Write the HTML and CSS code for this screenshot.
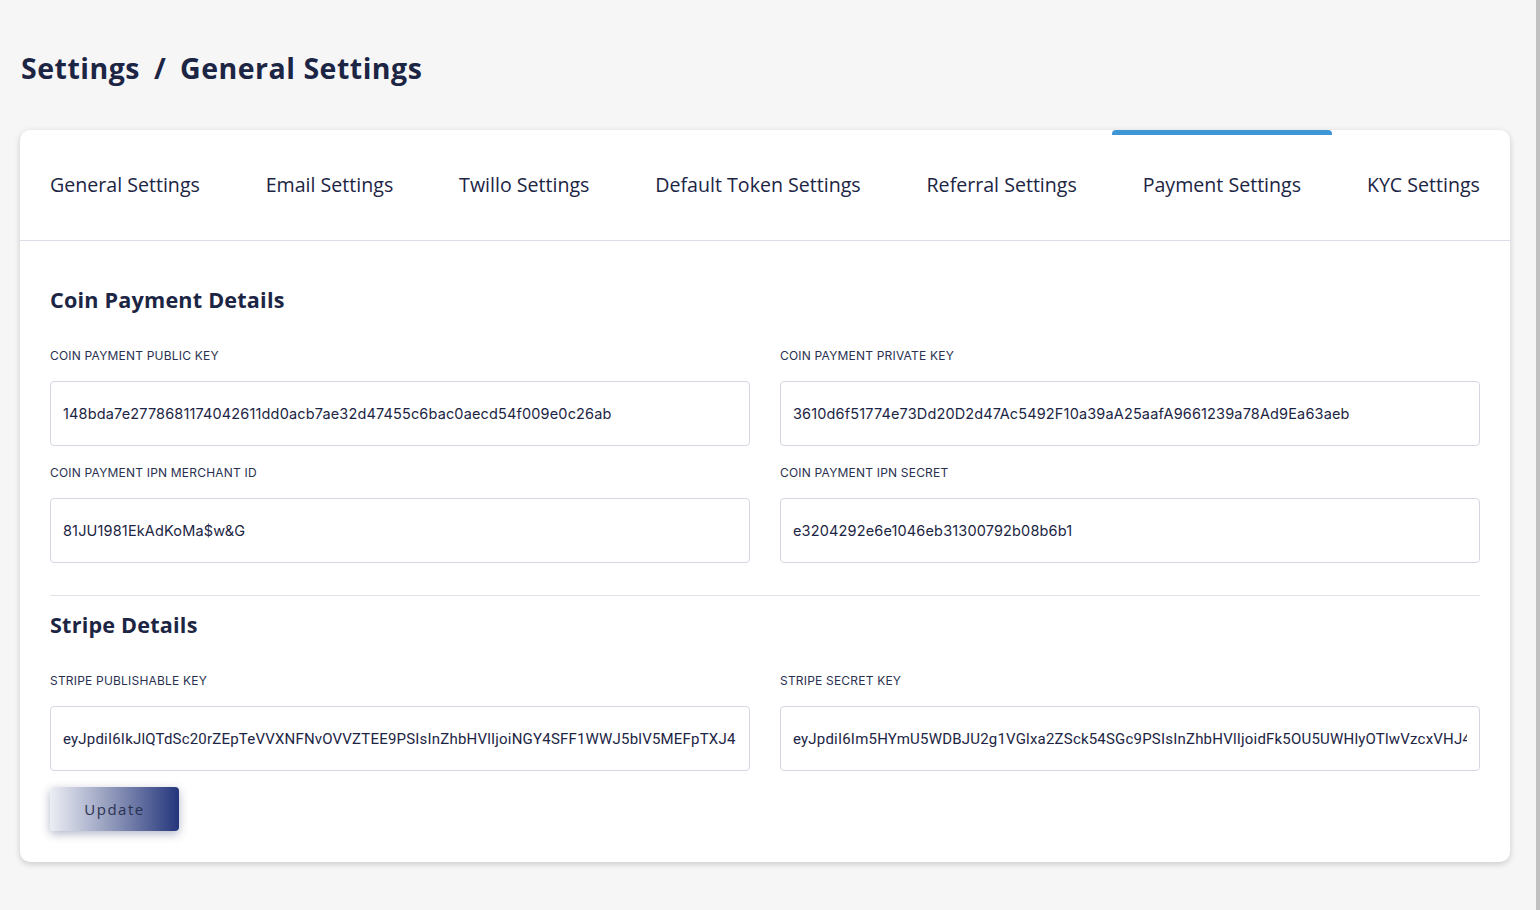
FILE: index.html
```html
<!DOCTYPE html>
<html lang="en">
<head>
<meta charset="utf-8">
<title>Settings / General Settings</title>
<link rel="stylesheet" href="styles.css">
</head>
<body>
<div class="page">
  <h1 class="page-title">Settings <span class="sep">/</span> General Settings</h1>
  <div class="card">
    <nav class="tabs">
      <a class="tab">General Settings</a>
      <a class="tab">Email Settings</a>
      <a class="tab">Twillo Settings</a>
      <a class="tab">Default Token Settings</a>
      <a class="tab">Referral Settings</a>
      <a class="tab active">Payment Settings</a>
      <a class="tab">KYC Settings</a>
    </nav>
    <div class="card-body">
      <section class="group">
        <h2 class="group-title">Coin Payment Details</h2>
        <div class="grid">
          <div class="field">
            <label class="label">COIN PAYMENT PUBLIC KEY</label>
            <input class="input" type="text" value="148bda7e2778681174042611dd0acb7ae32d47455c6bac0aecd54f009e0c26ab">
          </div>
          <div class="field">
            <label class="label">COIN PAYMENT PRIVATE KEY</label>
            <input class="input" type="text" value="3610d6f51774e73Dd20D2d47Ac5492F10a39aA25aafA9661239a78Ad9Ea63aeb">
          </div>
          <div class="field">
            <label class="label">COIN PAYMENT IPN MERCHANT ID</label>
            <input class="input" type="text" value="81JU1981EkAdKoMa$w&amp;G">
          </div>
          <div class="field">
            <label class="label">COIN PAYMENT IPN SECRET</label>
            <input class="input" type="text" value="e3204292e6e1046eb31300792b08b6b1">
          </div>
        </div>
      </section>
      <section class="group stripe">
        <h2 class="group-title">Stripe Details</h2>
        <div class="grid">
          <div class="field">
            <label class="label">STRIPE PUBLISHABLE KEY</label>
            <input class="input narrow" type="text" value="eyJpdiI6IkJlQTdSc20rZEpTeVVXNFNvOVVZTEE9PSIsInZhbHVlIjoiNGY4SFF1WWJ5blV5MEFpTXJ4">
          </div>
          <div class="field">
            <label class="label">STRIPE SECRET KEY</label>
            <input class="input narrow" type="text" value="eyJpdiI6Im5HYmU5WDBJU2g1VGlxa2ZSck54SGc9PSIsInZhbHVlIjoidFk5OU5UWHlyOTlwVzcxVHJ4">
          </div>
        </div>
      </section>
      <button class="btn-update" type="button">Update</button>
    </div>
  </div>
</div>
<div class="scrollbar"></div>
</body>
</html>
```

FILE: styles.css
```css
html, body {
  margin: 0;
  padding: 0;
  background: #f6f6f6;
  height: 100%;
  overflow: hidden;
}
body {
  font-family: "Open Sans", "Liberation Sans", sans-serif;
  color: #1c2544;
}
.page {
  padding: 46px 30px 0 20px;
  width: 1490px;
}
.page-title {
  margin: 0 0 40px 1px;
  font-size: 28.5px;
  font-weight: 700;
  letter-spacing: 0.5px;
  line-height: 44px;
  color: #1c2544;
}
.page-title .sep {
  margin: 0 6px;
}
.card {
  position: relative;
  background: #fff;
  border-radius: 10px;
  box-shadow: 0 2px 6px rgba(0,0,0,0.18);
  height: 732px;
}
.tabs {
  display: flex;
  justify-content: space-between;
  align-items: center;
  height: 110px;
  padding: 0 30px;
  border-bottom: 1px solid #dcdcea;
}
.tab {
  position: relative;
  font-size: 19.6px;
  color: #1c2544;
  line-height: 110px;
  white-space: nowrap;
  cursor: pointer;
}
.tab.active::before {
  content: "";
  position: absolute;
  top: 0;
  left: -31px;
  right: -31px;
  height: 5px;
  background: #3f96d6;
  border-radius: 4px 4px 0 0;
}
.card-body {
  padding: 43px 30px 0 30px;
}
.group-title {
  margin: 0 0 32px 0;
  font-size: 21.6px;
  font-weight: 700;
  line-height: 32px;
  color: #1c2544;
  letter-spacing: 0.2px;
}
.grid {
  display: grid;
  grid-template-columns: 1fr 1fr;
  column-gap: 30px;
  row-gap: 19px;
}
.field {
  display: flex;
  flex-direction: column;
}
.label {
  font-family: "Inter", "Liberation Sans", sans-serif;
  font-size: 12px;
  line-height: 16px;
  letter-spacing: 0.2px;
  color: #2a3150;
  margin-bottom: 17px;
}
.input {
  box-sizing: border-box;
  height: 65px;
  border: 1px solid #d6d6e2;
  border-radius: 4px;
  padding: 0 12px;
  font-family: "Inter", "Liberation Sans", sans-serif;
  font-size: 14.5px;
  letter-spacing: 0.15px;
  color: #1c2544;
  background: #fff;
  outline: none;
}
.input.narrow {
  font-family: "Roboto", "Liberation Sans", sans-serif;
  font-size: 15px;
  letter-spacing: 0.2px;
}
.stripe {
  margin-top: 32px;
  padding-top: 13px;
  border-top: 1px solid #e2e2ea;
}
.btn-update {
  margin-top: 16px;
  width: 129px;
  height: 44px;
  border: none;
  border-radius: 4px;
  background: linear-gradient(90deg, #eceef4 0%, #8c95b8 50%, #24367c 100%);
  box-shadow: 0 3px 10px rgba(40,50,100,0.35);
  font-family: "Open Sans", "Liberation Sans", sans-serif;
  font-size: 15px;
  letter-spacing: 1.5px;
  color: #2a3150;
  cursor: pointer;
}
.scrollbar {
  position: fixed;
  top: 0;
  right: 0;
  width: 4px;
  height: 100%;
  background: #c1c1c1;
}
```
